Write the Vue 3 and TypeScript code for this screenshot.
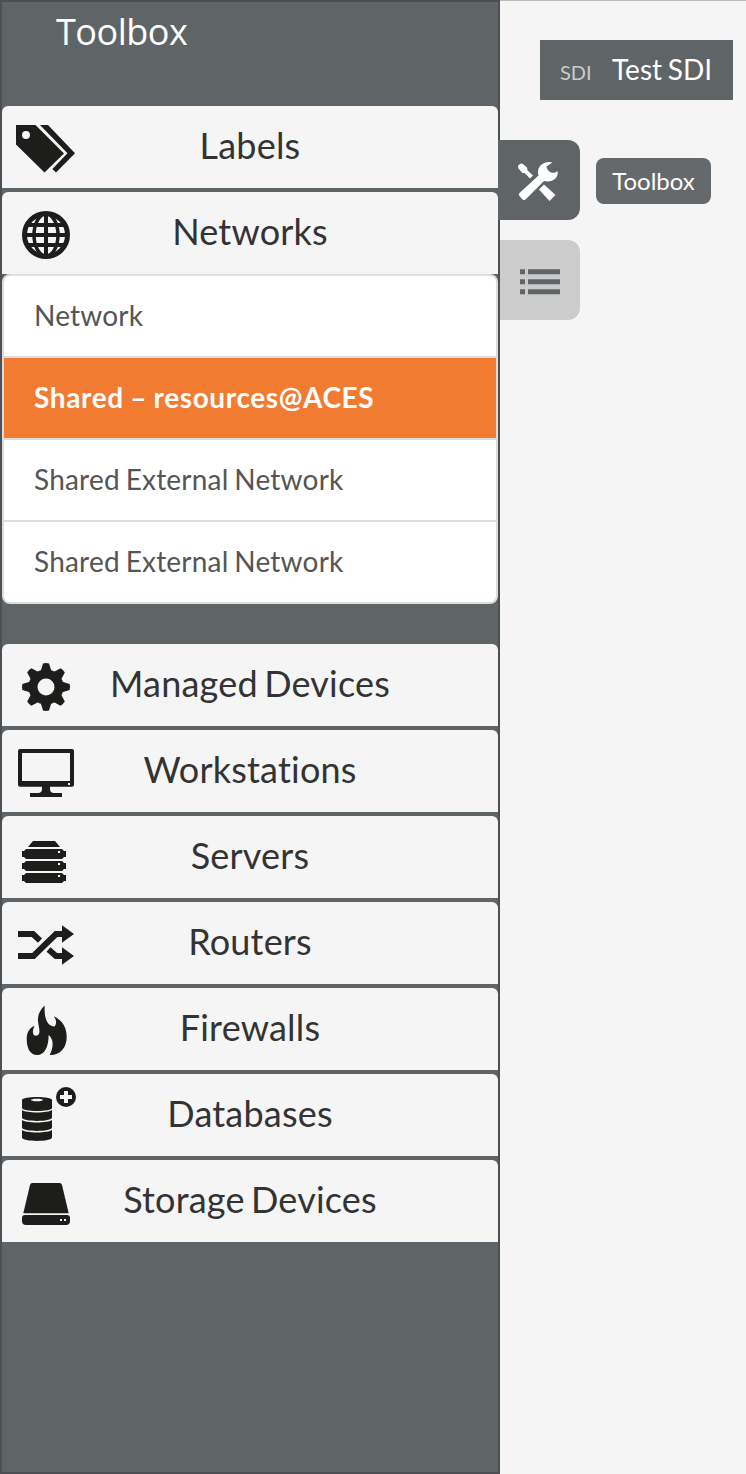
<script setup lang="ts">
interface Category {
  id: string
  label: string
  items?: string[]
}

const categories: Category[] = [
  { id: 'labels', label: 'Labels' },
  {
    id: 'networks',
    label: 'Networks',
    items: ['Network', 'Shared – resources@ACES', 'Shared External Network', 'Shared External Network'],
  },
  { id: 'devices', label: 'Managed Devices' },
  { id: 'workstations', label: 'Workstations' },
  { id: 'servers', label: 'Servers' },
  { id: 'routers', label: 'Routers' },
  { id: 'firewalls', label: 'Firewalls' },
  { id: 'databases', label: 'Databases' },
  { id: 'storage', label: 'Storage Devices' },
]
const activeItem = 1
const teeth = [0, 45, 90, 135, 180, 225, 270, 315]
</script>

<template>
  <div class="page">
    <aside class="sidebar">
      <h1 class="title">Toolbox</h1>
      <section v-for="c in categories" :key="c.id" class="group" :class="{ open: c.items }">
        <div class="head">
          <svg class="icon" viewBox="2 0 80 82" fill="#1d1d1b">
            <template v-if="c.id === 'labels'">
              <path fill-rule="evenodd" d="M16 19H35.5L64 47.5L44.5 66.5L16 38.5ZM26 25a4 4 0 1 0 0 8a4 4 0 1 0 0-8Z" />
              <path d="M40 19H48L75 47.3L56 66.5L52.3 63L67.5 47.3Z" />
            </template>
            <g v-else-if="c.id === 'networks'" fill="none" stroke="#1d1d1b" stroke-width="4">
              <circle cx="46" cy="43" r="21.5" stroke-width="5" />
              <ellipse cx="46" cy="43" rx="12" ry="21" stroke-width="3.5" />
              <path d="M46 20V66M23 43H69M28 33H64M28 53H64" />
            </g>
            <template v-else-if="c.id === 'devices'">
              <path fill-rule="evenodd" d="M46 25.5a17.5 17.5 0 1 0 0 35a17.5 17.5 0 1 0 0-35ZM46 34.5a8.5 8.5 0 1 1 0 17a8.5 8.5 0 1 1 0-17Z" />
              <path v-for="a in teeth" :key="a" d="M40.5 27.5L43 19.4Q46 18.6 49 19.4L51.5 27.5Z" :transform="`rotate(${a} 46 43)`" />
            </template>
            <template v-else-if="c.id === 'workstations'">
              <path fill-rule="evenodd" d="M20 19H72Q74 19 74 21V54.7Q74 56.7 72 56.7H20Q18 56.7 18 54.7V21Q18 19 20 19ZM22 23V51H70V23ZM68 53V55H70V53Z" />
              <path d="M42 56H50V59Q50 63 54 63H62V67H30V63H38Q42 63 42 59Z" />
            </template>
            <template v-else-if="c.id === 'servers'">
              <path d="M33 25H55L60 31H28Z" />
              <path v-for="y in [33, 45, 57]" :key="y" fill-rule="evenodd" :transform="`translate(0 ${y})`" d="M26 0H62L64 2H66V8H64L62 10H26L24 8H22V2H24ZM58 2V4H60V2Z" />
            </template>
            <template v-else-if="c.id === 'routers'">
              <path fill="none" stroke="#1d1d1b" stroke-width="6" d="M18 32H33L40 38.7M18 54H33.5L56 32H64M48.5 47.5L56 54H64" />
              <path d="M62 23.3L74 32L62 40.7ZM62 45.3L74 54L62 62.7Z" />
            </template>
            <path v-else-if="c.id === 'firewalls'" d="M44.7 17.5C40 22 37.5 27 38 33C38.5 39 41.5 46 37 47.6C34 48.4 31 46 34.5 37.7C29 40 26.7 45 26.7 51C26.7 60 30 67 37 67C45 67 48.7 58 48.6 47C53.5 51 54 58 49.7 67C60 67.3 66.7 60 66.7 49C66.7 39 62 32 53.7 28.3C56.5 31.5 57 36 54.3 38.5C47 38 44 30 44.7 17.5Z" />
            <template v-else-if="c.id === 'databases'">
              <path fill-rule="evenodd" d="M22 26C22 22.1 52 22.1 52 26V34C52 38 22 38 22 34ZM37 24.8C29 24.8 29 27.3 37 27.3S45 24.8 37 24.8Z" />
              <path v-for="y in [36, 46, 56]" :key="y" :transform="`translate(0 ${y})`" d="M22 0C25 3.3 49 3.3 52 0V7.5C52 12 22 12 22 7.5Z" />
              <path fill-rule="evenodd" d="M66 13a10 10 0 1 0 0 20a10 10 0 1 0 0-20ZM64 17H68V21H72V25H68V29H64V25H60V21H64Z" />
            </template>
            <template v-else>
              <path d="M32.5 23H59.5Q61.5 23 62 25L68.7 53.3H23.3L30 25Q30.5 23 32.5 23Z" />
              <path fill-rule="evenodd" d="M25 55H67Q70 55 70 58V61Q70 65 66 65H26Q22 65 22 61V58Q22 55 25 55ZM60 59V61H62V59ZM64 59V61H66V59Z" />
            </template>
          </svg>
          <span class="name">{{ c.label }}</span>
        </div>
        <ul v-if="c.items" class="items">
          <li v-for="(item, i) in c.items" :key="i" :class="{ active: i === activeItem }">{{ item }}</li>
        </ul>
      </section>
    </aside>
    <main class="canvas">
      <div class="crumb"><small>SDI</small><span>Test SDI</span></div>
      <div class="tab-row">
        <button class="tab selected" aria-label="Toolbox">
          <svg viewBox="0 0 80 80" fill="#fff">
            <path d="M52.5 22.5C45 20 35.5 26 38.5 35.5L19.5 53Q18 54.5 19.5 56L22 59Q24 61 26 59L44 41C52 43 59 38 57.5 31C52.5 35.5 47 31 46.5 26.5Z" />
            <path d="M18.5 25L21 23.5Q22 23.3 23 24L27 27.5L27.5 30.5L33 35.5L30 38.5L24.5 33H22.5L18.5 28.5Q17.5 26.5 18.5 25ZM39 49.5L44 44.5L55.5 55L49.5 61Z" />
          </svg>
        </button>
        <span class="tip">Toolbox</span>
      </div>
      <button class="tab" aria-label="List">
        <svg viewBox="0 0 80 80" fill="#5f6467">
          <path d="M20 29.3h5v5h-5zM28 29.3h32v5h-32zM20 39.3h5v5h-5zM28 39.3h32v5h-32zM20 49.3h5v5h-5zM28 49.3h32v5h-32z" />
        </svg>
      </button>
    </main>
  </div>
</template>

<style>
body {
  margin: 0;
}
</style>

<style scoped>
.page {
  display: flex;
  width: 746px;
  height: 1474px;
  overflow: hidden;
  background: #f5f5f5;
  font-family: Lato, sans-serif;
  font-variant-ligatures: none;
}
.page * {
  box-sizing: border-box;
}
.sidebar {
  flex: 0 0 500px;
  border: 2px solid #4c5054;
  background: #5f6467;
}
.title {
  height: 104px;
  margin: 0;
  padding: 5px 0 0 54px;
  font: 400 36px/50px "Open Sans", sans-serif;
  letter-spacing: -0.5px;
  color: #fff;
}
.group {
  margin-bottom: 4px;
}
.group.open {
  margin-bottom: 40px;
}
.head {
  display: grid;
  height: 82px;
  border-radius: 6px 6px 0 0;
  background: #f5f5f5;
}
.icon,
.name {
  grid-area: 1 / 1;
}
.icon {
  width: 80px;
  height: 82px;
}
.name {
  text-align: center;
  font-size: 36px;
  line-height: 78px;
  letter-spacing: 0.2px;
  word-spacing: -3px;
  color: #333;
}
.items {
  margin: 0;
  padding: 0;
  list-style: none;
  border: 2px solid #ddd;
  border-radius: 8px;
  background: #fff;
  overflow: hidden;
}
.items li {
  height: 82px;
  padding-left: 30px;
  border-bottom: 2px solid #ddd;
  font-size: 28px;
  line-height: 79px;
  letter-spacing: 0.2px;
  word-spacing: -1.5px;
  color: #555;
}
.items li:last-child {
  height: 80px;
  border-bottom: 0;
}
.items li.active {
  background: #f17c31;
  color: #fff;
  font-weight: 700;
  letter-spacing: 0.62px;
  word-spacing: -1px;
}
.canvas {
  flex: 1;
  border-top: 1px solid #bbb;
  padding-top: 39px;
}
.crumb {
  display: flex;
  align-items: baseline;
  width: 193px;
  height: 60px;
  margin-left: 40px;
  padding-left: 20px;
  background: #5f6467;
  color: #fff;
  font-size: 28px;
  line-height: 59px;
  word-spacing: -1.5px;
  white-space: nowrap;
}
.crumb small {
  width: 52px;
  font-size: 20px;
  color: #ccc;
}
.tab-row {
  display: flex;
  align-items: center;
  gap: 16px;
  margin: 40px 0 20px -2px;
}
.tab {
  display: block;
  width: 80px;
  height: 80px;
  padding: 0;
  border: 0;
  border-radius: 0 12px 12px 0;
  background: #ccc;
}
.tab svg {
  display: block;
  width: 80px;
  height: 80px;
}
.tab.selected {
  width: 82px;
  padding-left: 2px;
  background: #5f6467;
  position: relative;
}
.tip {
  width: 115px;
  height: 46px;
  margin-top: 2px;
  border-radius: 8px;
  background: #66696c;
  color: #fff;
  font-size: 24px;
  line-height: 45px;
  text-align: center;
}
</style>
